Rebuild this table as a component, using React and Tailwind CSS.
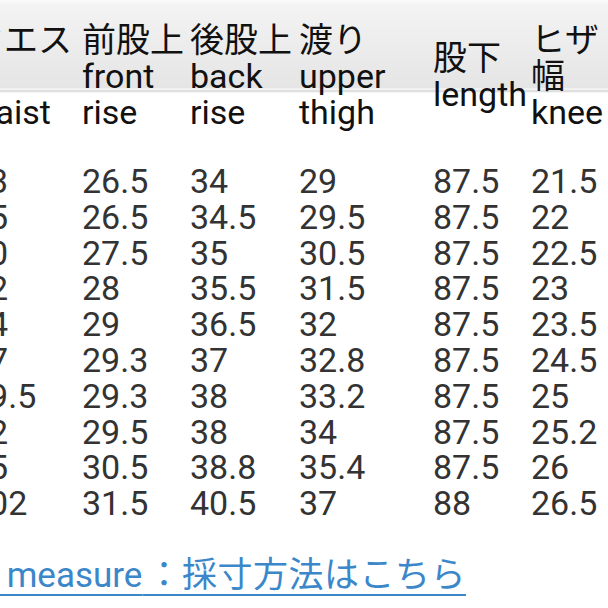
import React from "react";

const rows = [
  ["63", "26.5", "34", "29", "87.5", "21.5"],
  ["65", "26.5", "34.5", "29.5", "87.5", "22"],
  ["70", "27.5", "35", "30.5", "87.5", "22.5"],
  ["72", "28", "35.5", "31.5", "87.5", "23"],
  ["74", "29", "36.5", "32", "87.5", "23.5"],
  ["77", "29.3", "37", "32.8", "87.5", "24.5"],
  ["79.5", "29.3", "38", "33.2", "87.5", "25"],
  ["82", "29.5", "38", "34", "87.5", "25.2"],
  ["85", "30.5", "38.8", "35.4", "87.5", "26"],
  ["102", "31.5", "40.5", "37", "88", "26.5"],
];

const headers = [
  { jp: ["ウエス", "ト"], en: ["waist"] },
  { jp: ["前股上"], en: ["front", "rise"] },
  { jp: ["後股上"], en: ["back", "rise"] },
  { jp: ["渡り"], en: ["upper", "thigh"] },
  { jp: ["股下"], en: ["length"], middle: true },
  { jp: ["ヒザ", "幅"], en: ["knee"] },
];

export default function App() {
  return (
    <div className="w-[608px] h-[608px] overflow-hidden bg-[linear-gradient(to_bottom,#fbfbfb_0px,#f3f3f3_6px,#e5e5e5_88px,#fbfbfb_89px,#d6d6d6_91px,#ffffff_93px)] font-[Roboto,'Noto_Sans_CJK_JP',sans-serif]">
      <table className="table-fixed border-collapse -ml-[30px] w-[661px] text-[34px]">
        <colgroup>
          <col className="w-[112px]" />
          <col className="w-[108px]" />
          <col className="w-[109px]" />
          <col className="w-[134px]" />
          <col className="w-[98px]" />
          <col className="w-[100px]" />
        </colgroup>
        <thead>
          <tr>
            {headers.map((h, i) => (
              <th
                key={i}
                className={
                  "p-0 pt-[22px] text-left font-normal text-[#111] leading-[36px] whitespace-nowrap " +
                  (h.middle ? "align-middle" : "align-top")
                }
              >
                {[...h.jp, ...h.en].map((t, j) => (
                  <div key={j}>{t}</div>
                ))}
              </th>
            ))}
          </tr>
        </thead>
        <tbody>
          {rows.map((r, i) => (
            <tr key={i}>
              {r.map((v, j) => (
                <td
                  key={j}
                  className={
                    "p-0 text-left text-[#333] leading-[35.8px] whitespace-nowrap " +
                    (i === 0 ? "pt-[34px]" : "")
                  }
                >
                  {v}
                </td>
              ))}
            </tr>
          ))}
        </tbody>
      </table>
      <div className="mt-[36px] leading-[36px] text-[35px] whitespace-nowrap -ml-[113px]">
        <a className="text-[#3b87c9] underline underline-offset-[7px] decoration-2">
          How to measure
          <span className="tracking-[0.5px]">{"\u200A：採寸方法はこちら"}</span>
        </a>
      </div>
    </div>
  );
}
